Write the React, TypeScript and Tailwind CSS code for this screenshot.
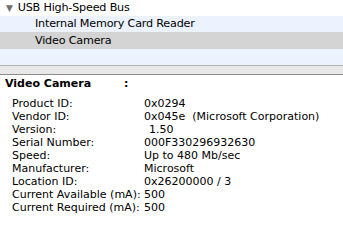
import React from "react";

const rows: [string, string, string?][] = [
  ["Product ID:", "0x0294"],
  ["Vendor ID:", "0x045e  (Microsoft Corporation)"],
  ["Version:", "1.50", "pl-[5px]"],
  ["Serial Number:", "000F330296932630"],
  ["Speed:", "Up to 480 Mb/sec"],
  ["Manufacturer:", "Microsoft"],
  ["Location ID:", "0x26200000 / 3"],
  ["Current Available (mA):", "500"],
  ["Current Required (mA):", "500"],
];

export default function App() {
  return (
    <main
      className="h-[241px] w-[343px] overflow-hidden bg-white text-black"
      style={{ fontFamily: '"DejaVu Sans", sans-serif' }}
    >
      <section className="text-[11.2px] leading-[16px] tracking-[-0.2px]">
        <div className="flex h-[16px] items-center bg-white">
          <span className="ml-[6px] mr-[5px] text-[9px] text-[#6e6e6e]">▼</span>
          <span>USB High-Speed Bus</span>
        </div>
        <div className="flex h-[16px] items-center bg-[#edf3fe] pl-[35px]">
          Internal Memory Card Reader
        </div>
        <div className="flex h-[17px] items-center bg-[#d4d4d4] pl-[35px]">
          Video Camera
        </div>
        <div className="h-[16px] bg-[#edf3fe]"></div>
      </section>
      <div className="h-[10px] border-t border-b border-t-[#b4b4b4] border-b-[#8c8c8c] bg-[#e8e8e8]"></div>
      <section className="pl-[5px] pt-[2px] text-[11px] leading-[13px]">
        <div className="flex font-bold">
          <span className="w-[119px]">Video Camera</span>
          <span>:</span>
        </div>
        <div className="mt-[7px] pl-[7px]">
          {rows.map(([label, value, extra]) => (
            <div key={label} className="flex">
              <span className="w-[132px] shrink-0">{label}</span>
              <span className={`whitespace-pre ${extra ?? ""}`}>{value}</span>
            </div>
          ))}
        </div>
      </section>
    </main>
  );
}
